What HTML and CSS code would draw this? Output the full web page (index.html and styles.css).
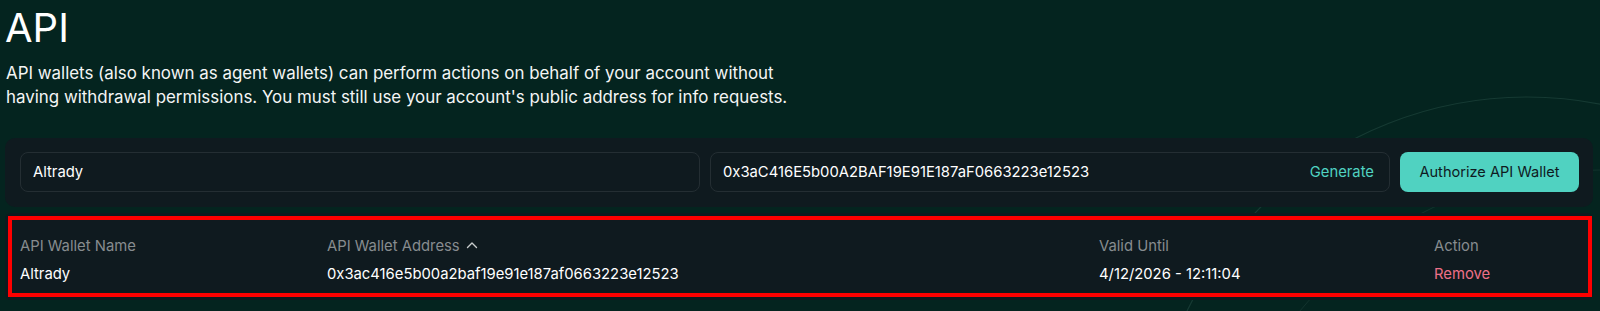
FILE: index.html
```html
<!DOCTYPE html>
<html lang="en">
<head>
<meta charset="utf-8">
<title>API</title>
<link rel="stylesheet" href="styles.css">
</head>
<body>
<svg class="bg-arcs" width="1600" height="311" viewBox="0 0 1600 311" aria-hidden="true">
  <circle cx="1527" cy="474" r="377" fill="none" stroke="#163a33" stroke-width="1.2"/>
  <circle cx="1600" cy="560" r="390" fill="none" stroke="#12332d" stroke-width="1"/>
</svg>
<main class="page">
  <h1 class="title">API</h1>
  <p class="intro">API wallets (also known as agent wallets) can perform actions on behalf of your account without having withdrawal permissions. You must still use your account's public address for info requests.</p>

  <section class="form-card">
    <div class="field">
      <span class="field-value">Altrady</span>
    </div>
    <div class="field">
      <span class="field-value">0x3aC416E5b00A2BAF19E91E187aF0663223e12523</span>
      <span class="field-action">Generate</span>
    </div>
    <button class="btn-primary" type="button">Authorize API Wallet</button>
  </section>

  <section class="table-card">
    <div class="table">
      <div class="th">API Wallet Name</div>
      <div class="th">API Wallet Address
        <svg class="sort" width="12" height="8" viewBox="0 0 12 8"><path d="M1.5 6.5 L6 2 L10.5 6.5" fill="none" stroke="#c9cccd" stroke-width="1.4" stroke-linecap="round" stroke-linejoin="round"/></svg>
      </div>
      <div class="th">Valid Until</div>
      <div class="th">Action</div>
      <div class="td">Altrady</div>
      <div class="td">0x3ac416e5b00a2baf19e91e187af0663223e12523</div>
      <div class="td">4/12/2026 - 12:11:04</div>
      <div class="td remove">Remove</div>
    </div>
  </section>
</main>
</body>
</html>
```

FILE: styles.css
```css
* { box-sizing: border-box; }
html, body {
  margin: 0;
  padding: 0;
  background: #04241f;
  color: #ffffff;
  font-family: Inter, "Noto Sans", "Liberation Sans", sans-serif;
  overflow: hidden;
}
body { position: relative; width: 1600px; height: 311px; }
.bg-arcs {
  position: absolute;
  left: 0;
  top: 0;
  z-index: 0;
}
.page {
  position: relative;
  z-index: 1;
  padding: 4px 7px 0 5px;
  display: flex;
  flex-direction: column;
}
.title {
  margin: 0 0 9px 0;
  font-size: 40px;
  line-height: 48px;
  font-weight: 400;
  letter-spacing: 0;
}
.intro {
  margin: 0 0 29px 1px;
  max-width: 800px;
  font-size: 16.9px;
  line-height: 24px;
  color: #f4f5f5;
}
.form-card {
  background: #0f1a1f;
  border-radius: 10px;
  padding: 14px 14px 15px 15px;
  display: flex;
  gap: 10px;
  align-items: stretch;
}
.field {
  flex: 1 1 0;
  height: 40px;
  border: 1px solid #242e33;
  border-radius: 8px;
  padding: 0 15px 0 12px;
  display: flex;
  align-items: center;
  justify-content: space-between;
  font-size: 14.8px;
}
.field-value { color: #ffffff; }
.field-action { color: #50d2c1; }
.btn-primary {
  width: 179px;
  height: 40px;
  border: none;
  border-radius: 8px;
  background: #50d2c1;
  color: #0f1a1f;
  font-family: inherit;
  font-size: 14.6px;
  font-weight: 400;
  padding: 0;
}
.table-card {
  position: relative;
  margin-top: 6px;
  background: #0f1a1f;
  border-radius: 6px;
  padding: 23px 15px 16px 15px;
}
.table-card::after {
  content: "";
  position: absolute;
  inset: 3px 1px 3px 3px;
  border: 4px solid #ff0000;
  pointer-events: none;
}
.table {
  display: grid;
  grid-template-columns: 307px 772px 335px 1fr;
  row-gap: 8px;
  font-size: 14.8px;
  line-height: 20px;
}
.th {
  color: #878c8f;
  display: flex;
  align-items: center;
  gap: 6px;
}
.sort { margin-top: -2px; }
.td { color: #ffffff; }
.remove { color: #ed7088; }
```
